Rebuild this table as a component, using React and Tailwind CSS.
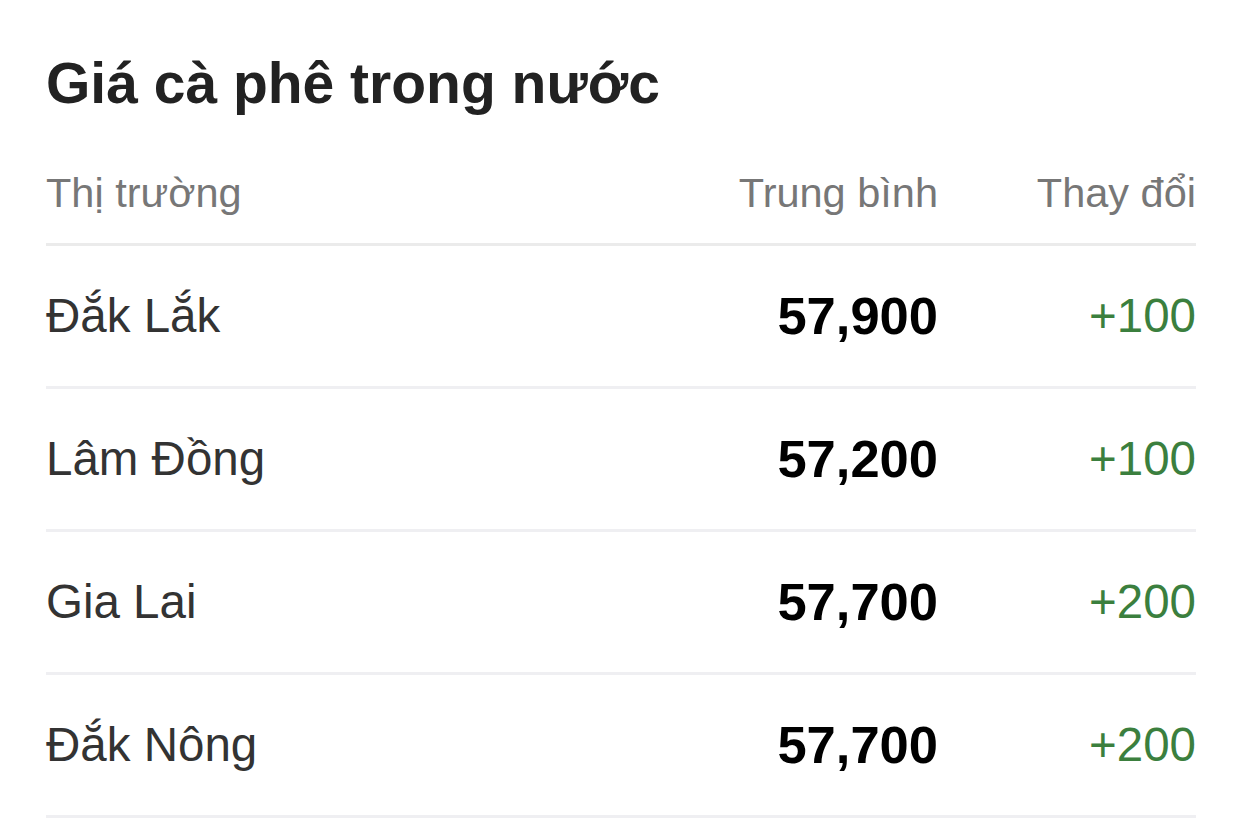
import React from "react";

const rows = [
  { market: "Đắk Lắk", avg: "57,900", change: "+100" },
  { market: "Lâm Đồng", avg: "57,200", change: "+100" },
  { market: "Gia Lai", avg: "57,700", change: "+200" },
  { market: "Đắk Nông", avg: "57,700", change: "+200" },
];

export default function App() {
  return (
    <div className="min-h-screen bg-white px-[46px] pt-[51px]" style={{ fontFamily: '"Liberation Sans", Arial, sans-serif' }}>
      <h1 className="text-[57px] leading-[64px] font-bold text-[#222222] mb-[54px]">Giá cà phê trong nước</h1>

      {/* header */}
      <div className="flex items-center text-[41.5px] leading-[48px] text-[#777777] pb-[26px] border-b-[3px] border-[#ebebeb]">
        <div className="flex-1">Thị trường</div>
        <div className="text-right">Trung bình</div>
        <div className="w-[258px] text-right">Thay đổi</div>
      </div>

      {rows.map((row, i) => (
        <div key={i} className="flex items-center h-[143px] border-b-[3px] border-[#efeff2]">
          <div className="flex-1 text-[47.5px] text-[#333333]">{row.market}</div>
          <div className="text-right text-[52.5px] font-bold text-black">{row.avg}</div>
          <div className="w-[258px] text-right text-[47.5px] text-[#3b7f3e]">{row.change}</div>
        </div>
      ))}
    </div>
  );
}
